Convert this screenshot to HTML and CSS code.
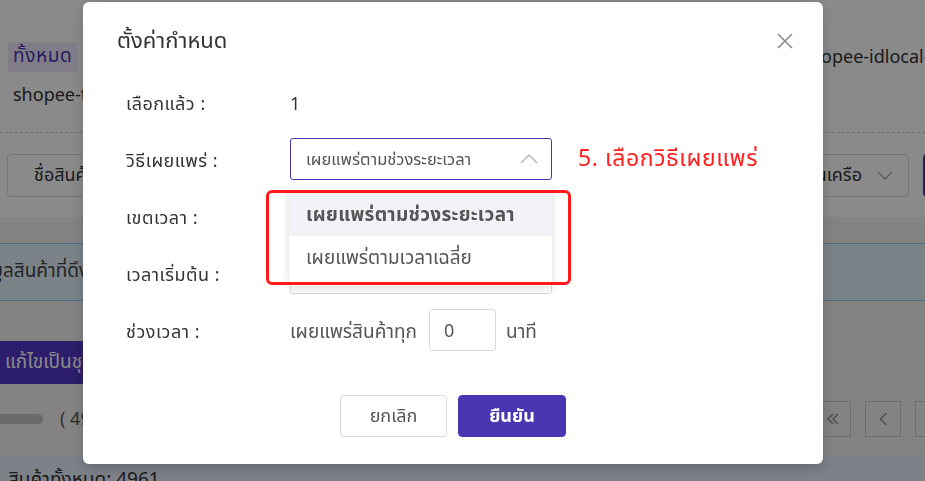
FILE: index.html
```html
<!DOCTYPE html>
<html lang="th">
<head>
<meta charset="utf-8">
<title>ตั้งค่ากำหนด</title>
<link rel="stylesheet" href="styles.css">
</head>
<body>
<div class="page">
  <div class="head">
    <div class="tagrow">
      <span class="tag">ทั้งหมด</span>
      <span class="shop-right">shopee-idlocal-th</span>
    </div>
    <div class="shop-left">shopee-th-store</div>
  </div>
  <div class="toolbar">
    <div class="tool-btn">ชื่อสินค้า</div>
    <div class="tool-right">
      <div class="tool-select">ร้านในเครือ
        <svg class="chev-down" width="16" height="9" viewBox="0 0 16 9"><path d="M1 1 L8 8 L15 1" stroke="#aaa" stroke-width="1.3" fill="none"/></svg>
      </div>
      <div class="tool-purple"></div>
    </div>
  </div>
  <div class="content">
    <div class="alert">ข้อมูลสินค้าที่ดึงมา</div>
    <div class="action-row"><span class="purple-btn">แก้ไขเป็นชุด</span></div>
    <div class="pager-row">
      <div class="progress"><span class="bar"></span><span class="count">( 4961 )</span></div>
      <div class="pager">
        <span class="pg"><svg width="14" height="12" viewBox="0 0 14 12"><path d="M7 1 L2 6 L7 11 M12 1 L7 6 L12 11" stroke="#999" stroke-width="1.6" fill="none"/></svg></span>
        <span class="pg"><svg width="9" height="14" viewBox="0 0 9 14"><path d="M7.5 1 L1.5 7 L7.5 13" stroke="#999" stroke-width="1.6" fill="none"/></svg></span>
        <span class="pg"></span>
      </div>
    </div>
  </div>
  <div class="footer">สินค้าทั้งหมด: 4961</div>
</div>

<div class="overlay"></div>

<div class="modal">
  <div class="modal-title">ตั้งค่ากำหนด</div>
  <button class="close" aria-label="close">
    <svg width="16" height="16" viewBox="0 0 16 16"><path d="M1 1 L15 15 M15 1 L1 15" stroke="#8c8c8c" stroke-width="1.6" fill="none"/></svg>
  </button>
  <div class="form">
    <div class="label">เลือกแล้ว :</div>
    <div class="field"><span class="value">1</span></div>

    <div class="label">วิธีเผยแพร่ :</div>
    <div class="field">
      <div class="select">
        <span>เผยแพร่ตามช่วงระยะเวลา</span>
        <svg class="chev" width="18" height="10" viewBox="0 0 18 10"><path d="M1 9 L9 1 L17 9" stroke="#b3b3b3" stroke-width="1.4" fill="none"/></svg>
      </div>
      <span class="note">5. เลือกวิธีเผยแพร่</span>
    </div>

    <div class="label">เขตเวลา :</div>
    <div class="field"><div class="input wide"></div></div>

    <div class="label">เวลาเริ่มต้น :</div>
    <div class="field"><div class="input wide"></div></div>

    <div class="label">ช่วงเวลา :</div>
    <div class="field">
      <span class="text">เผยแพร่สินค้าทุก</span>
      <div class="input small">0</div>
      <span class="text">นาที</span>
    </div>
  </div>
  <div class="buttons">
    <button class="btn cancel">ยกเลิก</button>
    <button class="btn ok">ยืนยัน</button>
  </div>

  <div class="dropdown">
    <div class="opt active">เผยแพร่ตามช่วงระยะเวลา</div>
    <div class="opt">เผยแพร่ตามเวลาเฉลี่ย</div>
  </div>
  <div class="redbox"></div>
</div>
</body>
</html>
```

FILE: styles.css
```css
* { box-sizing: border-box; }
html, body {
  margin: 0;
  padding: 0;
  width: 925px;
  height: 481px;
  overflow: hidden;
  font-family: "Noto Sans Thai", "Noto Sans", "Liberation Sans", sans-serif;
  color: #333;
  background: #fff;
}

/* background page */
.page { width: 925px; height: 481px; overflow: hidden; }
.head {
  padding: 42px 8px 0;
  height: 133px;
  border-bottom: 1px dashed #d0d0d0;
}
.tagrow { display: flex; align-items: center; height: 30px; }
.tag {
  background: #ece8fb;
  color: #4b36b1;
  font-size: 19px;
  letter-spacing: 0.6px;
  padding: 0 5px;
  height: 30px;
  line-height: 30px;
  border-radius: 3px;
}
.shop-right {
  margin-left: 724px;
  font-size: 18px;
  white-space: nowrap;
  color: #333;
}
.shop-left { margin: 10px 0 0 5px; font-size: 18px; white-space: nowrap; }

.toolbar {
  display: flex;
  justify-content: space-between;
  align-items: center;
  height: 84px;
  padding: 0 0 0 7px;
}
.tool-btn {
  height: 43px;
  width: 180px;
  border: 1px solid #d9d9d9;
  border-radius: 4px;
  padding-left: 26px;
  line-height: 41px;
  font-size: 18px;
  white-space: nowrap;
}
.tool-right { display: flex; align-items: center; gap: 14px; margin-right: -18px; flex-shrink: 0; }
.tool-select {
  height: 43px;
  width: 190px;
  border: 1px solid #d9d9d9;
  border-radius: 4px;
  font-size: 18px;
  display: flex;
  align-items: center;
  justify-content: flex-end;
  gap: 15px;
  padding-right: 15px;
  white-space: nowrap;
}
.chev-down { display: block; }
.tool-purple { width: 20px; height: 43px; background: #4b36b1; border-radius: 4px 0 0 4px; flex-shrink: 0; }

.content {
  background: #f2f2f2;
  height: 238px;
  padding-top: 26px;
}
.alert {
  height: 58px;
  background: #e3f1fc;
  border-top: 1px solid #8cc4ec;
  border-bottom: 1px solid #8cc4ec;
  font-size: 19px;
  line-height: 56px;
  text-indent: -30px;
  white-space: nowrap;
  color: #444;
  overflow: hidden;
}
.action-row { margin-top: 40px; height: 43px; }
.purple-btn {
  display: inline-block;
  background: #5238c8;
  color: #fff;
  height: 43px;
  line-height: 43px;
  padding: 0 20px 0 5px;
  font-size: 19px;
  white-space: nowrap;
  border-radius: 0 4px 4px 0;
}
.pager-row {
  display: flex;
  justify-content: space-between;
  align-items: center;
  margin-top: 17px;
}
.progress { display: flex; align-items: center; gap: 17px; }
.bar { width: 43px; height: 10px; background: #c4c4c4; border-radius: 0 5px 5px 0; }
.count { font-size: 18px; color: #555; }
.pager { display: flex; gap: 14px; margin-right: -26px; }
.pg {
  width: 36px; height: 36px;
  border: 1px solid #ccc;
  display: flex;
  align-items: center;
  justify-content: center;
}

.footer {
  background: #e8eefc;
  height: 40px;
  padding: 11px 0 0 8px;
  font-size: 19px;
  white-space: nowrap;
}

.overlay {
  position: fixed;
  inset: 0;
  background: rgba(0, 0, 0, 0.46);
}

/* modal */
.modal {
  position: fixed;
  left: 83px;
  top: 2px;
  width: 740px;
  height: 462px;
  background: #fff;
  border-radius: 6px;
  box-shadow: 0 4px 14px rgba(0,0,0,0.2);
}
.modal-title {
  padding: 25px 0 0 34px;
  font-size: 22px;
  line-height: 30px;
  color: #333;
}
.close {
  position: absolute;
  top: 31px;
  right: 30px;
  border: 0;
  background: none;
  padding: 0;
  width: 16px;
  height: 16px;
  display: flex;
}
.form {
  margin: 24px 0 0 43px;
  display: grid;
  grid-template-columns: 164px 1fr;
  grid-auto-rows: 42px;
  row-gap: 15px;
  font-size: 18px;
}
.label { display: flex; align-items: center; color: #333; white-space: nowrap; letter-spacing: 0.5px; padding-top: 4px; }
.field { display: flex; align-items: center; }
.value { color: #333; padding-top: 4px; }
.select {
  width: 262px;
  height: 42px;
  border: 1px solid #4b36b1;
  border-radius: 3px;
  display: flex;
  align-items: center;
  justify-content: space-between;
  padding: 0 13px 0 15px;
  color: #555;
  font-size: 16.5px;
  white-space: nowrap;
}
.chev { display: block; }
.note {
  margin-left: 26px;
  color: #ff2020;
  font-size: 23px;
  letter-spacing: 0.6px;
  white-space: nowrap;
}
.input {
  height: 42px;
  border: 1px solid #d9d9d9;
  border-radius: 3px;
}
.wide { width: 262px; }
.small {
  width: 67px;
  margin: 0 10px 0 0;
  padding: 3px 0 0 14px;
  display: flex;
  align-items: center;
  color: #555;
}
.text { color: #555; margin-right: 12px; white-space: nowrap; font-size: 19px; padding-top: 4px; }

.buttons {
  display: flex;
  justify-content: center;
  gap: 11px;
  margin-top: 44px;
}
.btn {
  width: 107px;
  height: 42px;
  border-radius: 4px;
  font-family: inherit;
  font-size: 18px;
  padding-top: 2px;
}
.cancel { background: #fff; border: 1px solid #d9d9d9; color: #555; }
.ok { background: #4b36b1; border: 1px solid #4b36b1; color: #fff; font-weight: bold; width: 108px; }

.dropdown {
  position: absolute;
  left: 206px;
  top: 184px;
  width: 263px;
  padding: 7px 0;
  background: #fff;
  border-radius: 3px;
  box-shadow: 0 2px 8px rgba(0,0,0,0.15);
  font-size: 19px;
}
.opt {
  height: 43px;
  line-height: 45px;
  padding-left: 17px;
  color: #555;
  white-space: nowrap;
}
.opt.active { background: #f2f2f8; font-weight: bold; letter-spacing: 0.3px; }
.redbox {
  position: absolute;
  left: 183px;
  top: 188px;
  width: 305px;
  height: 95px;
  border: 3px solid #ff1a1a;
  border-radius: 6px;
}
```
